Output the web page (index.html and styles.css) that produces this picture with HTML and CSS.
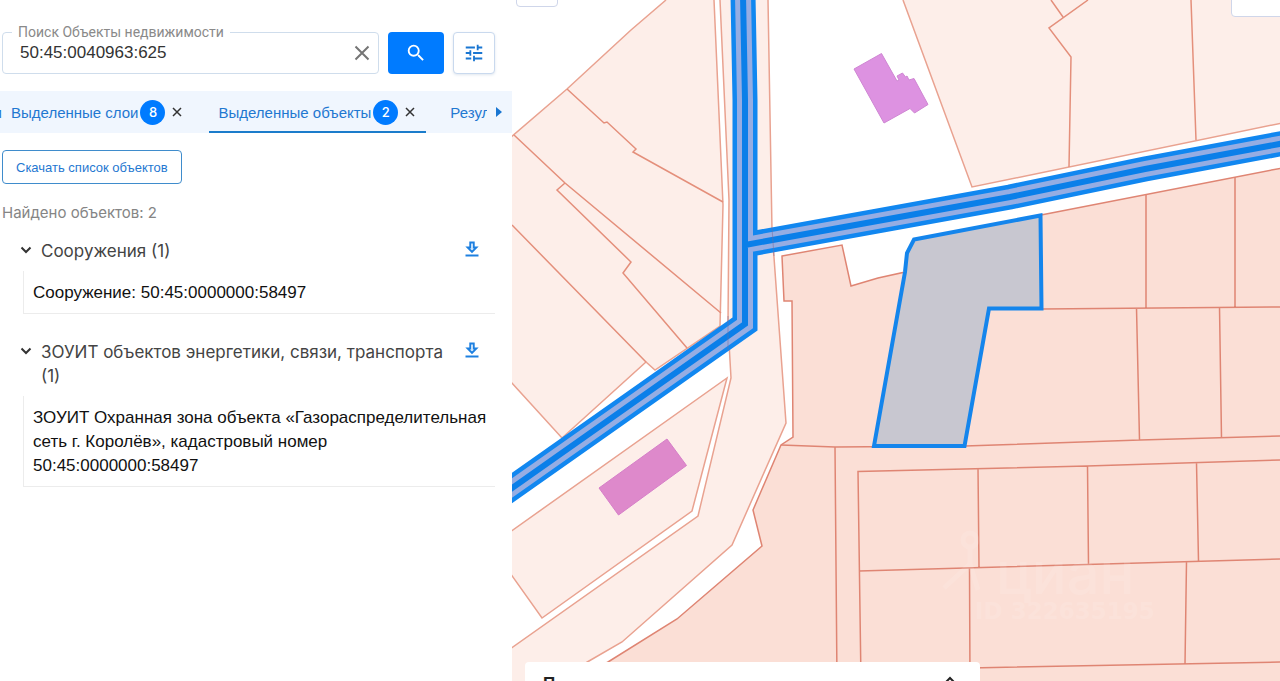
FILE: index.html
```html
<!DOCTYPE html>
<html lang="ru">
<head>
<meta charset="utf-8">
<meta name="viewport" content="width=device-width, initial-scale=1">
<title>Поиск объектов недвижимости</title>
<link rel="stylesheet" href="styles.css">
</head>
<body>
<div class="app">
  <aside class="sidebar">
    <form class="search">
      <div class="search-field">
        <label class="search-label" for="query">Поиск Объекты недвижимости</label>
        <input class="search-input" id="query" type="text" value="50:45:0040963:625">
        <button class="clear" type="button" aria-label="Очистить">
          <svg width="16" height="16" viewBox="0 0 16 16"><path d="M1.500 1.500l13 13M14.500 1.500l-13 13" fill="none" stroke="#757575" stroke-width="2"/></svg>
        </button>
      </div>
      <button class="search-submit" type="button" aria-label="Найти">
        <svg width="22" height="22" viewBox="0 0 24 24"><path fill="#fff" d="M15.500 14h-.79l-.28-.27A6.470 6.470 0 0 0 16 9.500 6.500 6.500 0 1 0 9.500 16c1.610 0 3.090-.59 4.230-1.570l.27.28v.79l5 4.990L20.490 19l-4.990-5zm-6 0C7.010 14 5 11.990 5 9.500S7.010 5 9.500 5 14 7.010 14 9.500 11.990 14 9.500 14z"/></svg>
      </button>
      <button class="filter" type="button" aria-label="Фильтры">
        <svg width="22" height="22" viewBox="0 0 24 24"><path fill="#1976d2" d="M3 17v2h6v-2H3zM3 5v2h10V5H3zm10 16v-2h8v-2h-8v-2h-2v6h2zM7 9v2H3v2h4v2h2V9H7zm14 4v-2H11v2h10zm-6-4h2V7h4V5h-4V3h-2v6z"/></svg>
      </button>
    </form>

    <nav class="tabs">
      <div class="tabs-view">
        <button class="tab tab-prev" type="button">и</button>
        <div class="tab">
          <button class="tab-title" type="button">Выделенные слои</button><span class="badge">8</span>
          <button class="tab-close" type="button" aria-label="Закрыть"><svg width="10" height="10" viewBox="0 0 10 10"><path d="M1 1l8 8M9 1l-8 8" fill="none" stroke="#333" stroke-width="1.500"/></svg></button>
        </div>
        <div class="tab tab-active">
          <button class="tab-title" type="button">Выделенные объекты</button><span class="badge">2</span>
          <button class="tab-close" type="button" aria-label="Закрыть"><svg width="10" height="10" viewBox="0 0 10 10"><path d="M1 1l8 8M9 1l-8 8" fill="none" stroke="#333" stroke-width="1.500"/></svg></button>
        </div>
        <button class="tab tab-next" type="button">Результаты</button>
      </div>
      <button class="tabs-more" type="button" aria-label="Дальше"><svg width="6" height="10" viewBox="0 0 6 10"><path d="M0 0l6 5-6 5z" fill="#1976d2"/></svg></button>
    </nav>

    <div class="results">
      <button class="download-all" type="button">Скачать список объектов</button>
      <p class="count">Найдено объектов: 2</p>

      <section class="group">
        <div class="group-head">
          <svg class="chevron" width="12" height="8" viewBox="0 0 12 8"><path d="M1.500 1.500L6 6l4.500-4.500" fill="none" stroke="#333" stroke-width="2"/></svg>
          <h2 class="group-title">Сооружения (1)</h2>
          <button class="download" type="button" aria-label="Скачать"><svg width="14" height="16" viewBox="0 0 14 16"><path d="M5.200 1.500v5H2.500L7 11l4.500-4.500H8.800v-5z" fill="#d6e9fc" stroke="#1e80e0" stroke-width="1.800"/><path d="M.5 14.500h13" stroke="#1e80e0" stroke-width="2"/></svg></button>
        </div>
        <div class="item">Сооружение: 50:45:0000000:58497</div>
      </section>

      <section class="group">
        <div class="group-head">
          <svg class="chevron" width="12" height="8" viewBox="0 0 12 8"><path d="M1.500 1.500L6 6l4.500-4.500" fill="none" stroke="#333" stroke-width="2"/></svg>
          <h2 class="group-title">ЗОУИТ объектов энергетики, связи, транспорта (1)</h2>
          <button class="download" type="button" aria-label="Скачать"><svg width="14" height="16" viewBox="0 0 14 16"><path d="M5.200 1.500v5H2.500L7 11l4.500-4.500H8.800v-5z" fill="#d6e9fc" stroke="#1e80e0" stroke-width="1.800"/><path d="M.5 14.500h13" stroke="#1e80e0" stroke-width="2"/></svg></button>
        </div>
        <div class="item">ЗОУИТ Охранная зона объекта «Газораспределительная сеть г. Королёв», кадастровый номер 50:45:0000000:58497</div>
      </section>
    </div>
  </aside>

  <main class="map">
    <svg class="map-canvas" viewBox="512 0 768 681" preserveAspectRatio="xMinYMin slice" role="img" aria-label="Кадастровая карта">
      <g class="parcel-light">
        <path d="M666 0L631 30 567 89 510 138V381L562 438 646 362 655 370 720 326 723 205 714 0"/>
        <path d="M567 89L604 123 607 122 636 149 633 152 723 202M514 135L565 183 721 313M565 183L557 190 631 262 623 273 687 348M512 225L646 362" class="line"/>
        <path d="M720 0L729 200 728 325 731 378 698 516 510 649V690H540L589 661 622 642 732 545 786 423 772 230 768 0"/>
        <path d="M727 378L692 511 542 618 510 573V532Z"/>
        <path d="M903 0L972 187 1282 123V-2"/>
        <path d="M1051 0L1063 17M1088 0L1049 28 1071 57 1069 167M1191 0L1196 140" class="line"/>
      </g>
      <g class="parcel-dark">
        <path d="M782 256L842 245 851 286 878 278 905 272 914 240 1041 215 1282 168V690H560L608 662 677 619 762 546 753 510 781 445 793 437 792 301H784Z"/>
        <path class="line" d="M781 445L835 447 965 446 1140 440 1280 436M835 447L837 681M861 681L858 471.500 1087 466 1280 460M978 468L979 567M1087.500 466L1088.500 565M1196.500 463L1198.500 561M859 571L1280 559M969.500 568L970 681M1186.500 562L1185 664M970 668L1280 662M1146 194V308M1235 177V307M1042 309L1280 307M1136.500 308L1139.500 440M1219.500 307L1221.500 438"/>
      </g>
      <path class="house" d="M854 69L881.500 53.500 897 81 899 80 897 76 902.500 73 905.500 77 907 76 909 80 914 78.500 928 104.500 914.500 113 910 108.500 884 123Z"/>
      <path class="house house-rose" d="M599 488L667 439 686.500 465.500 618.500 515Z"/>
      <g class="pipe">
        <path class="pipe-edge" d="M743 -5L745 100V324L500 496.500M745 245L1010 197 1145 169 1290 142"/>
        <path class="pipe-zone" d="M743 -5L745 100V324L500 496.500M745 245L1010 197 1145 169 1290 142"/>
        <path class="pipe-core" d="M743 -5L745 100V324L500 496.500M745 245L1010 197 1145 169 1290 142"/>
        <path class="under" d="M772 228L774 256M728 316L728 350"/>
      </g>
      <path class="selected" d="M914 239.500L1040.500 215.500 1041.500 308.500H989L964.500 446H874L905 272 907 253Z"/>
      <g class="watermark">
        <circle cx="970" cy="540" r="7"/>
        <path d="M970 548V564L944 588M970 564L978 590"/>
        <text class="mark-name" x="996" y="594">циан</text>
        <text class="mark-id" x="975" y="619">ID 322635195</text>
      </g>
    </svg>
    <div class="control control-left"></div>
    <div class="control control-right"></div>
    <div class="sheet">
      <span class="sheet-title">П</span>
      <svg class="sheet-arrow" width="12" height="8" viewBox="0 0 12 8"><path d="M1.500 6.500L6 2l4.500 4.500" fill="none" stroke="#222" stroke-width="2"/></svg>
    </div>
  </main>
</div>
</body>
</html>
```

FILE: styles.css
```css
* { box-sizing: border-box; }

body {
  margin: 0;
  font-family: "Liberation Sans", Arial, sans-serif;
  font-size: 17px;
  color: #111;
  background: #fff;
}

button {
  padding: 0;
  border: 0;
  background: none;
  font: inherit;
  color: inherit;
  cursor: pointer;
}

svg { display: block; }

.app {
  display: grid;
  grid-template-columns: 2fr 3fr;
  height: 100vh;
  overflow: hidden;
}

.sidebar { min-width: 0; }

.search {
  display: flex;
  gap: 9px;
  padding: 32px 17px 17px 2px;
}

.search-field {
  position: relative;
  display: flex;
  flex: 1;
  align-items: center;
  height: 42px;
  padding: 0 8px 0 17px;
  border: 1px solid #cfddec;
  border-radius: 4px;
}

.search-label {
  position: absolute;
  top: -9px;
  left: 9px;
  padding: 0 6px;
  background: #fff;
  color: #8a8a8a;
  font: 14px/16px Roboto, sans-serif;
}

.search-input {
  flex: 1;
  min-width: 0;
  padding: 0;
  border: 0;
  outline: 0;
  background: none;
  color: #333;
  font: inherit;
}

.search-submit,
.filter {
  display: grid;
  place-items: center;
  width: 56px;
  height: 42px;
  border-radius: 4px;
  background: #007bff;
}

.filter {
  width: 42px;
  border: 1px solid #c9d9ee;
  background: #fff;
  box-shadow: 0 1px 3px #dfe6ef;
}

.tabs {
  display: flex;
  height: 42px;
  background: #f0f6fe;
  color: #1f78d1;
  font-size: 15px;
}

.tabs-view {
  display: flex;
  flex: 1;
  min-width: 0;
  overflow: hidden;
}

.tab {
  display: flex;
  flex: none;
  align-items: center;
  padding: 0 17px 0 9px;
}

.tab-prev {
  justify-content: flex-end;
  width: 2px;
  padding: 0;
  overflow: hidden;
}

.tab-active {
  margin-left: 10px;
  border-bottom: 2px solid #1b7ccb;
  padding-right: 11px;
}

.tab-active > * { margin-bottom: -2px; }

.tab-next { padding-left: 24px; }

.badge {
  display: grid;
  place-items: center;
  width: 25px;
  height: 25px;
  margin-left: 2px;
  border-radius: 50%;
  background: #007bff;
  color: #fff;
  font: 500 13px Inter, sans-serif;
}

.tab-close { margin-left: 7px; }

.tabs-more {
  display: flex;
  align-items: center;
  width: 25px;
  padding-left: 9px;
}

.results { padding: 17px 17px 0 2px; }

.download-all {
  height: 34px;
  padding: 0 13px;
  border: 1px solid #3f8ccc;
  border-radius: 4px;
  color: #1f78d1;
  font-size: 13px;
}

.count {
  margin: 17px 0 14px;
  color: #858585;
  font: 15px/24px Inter, sans-serif;
}

.group { margin-bottom: 26px; }

.group-head {
  display: flex;
  align-items: flex-start;
  padding: 0 16px 8px 18px;
}

.chevron {
  flex: none;
  margin-top: 7px;
}

.group-title {
  flex: 1;
  margin: 0 0 0 9px;
  color: #444;
  font: 400 17px/24px Inter, sans-serif;
}

.download { margin-top: 2px; }

.item {
  margin-left: 21px;
  padding: 10px 0 8px 9px;
  border: 1px solid #ececec;
  border-width: 0 0 1px 1px;
  line-height: 24px;
}

.map {
  position: relative;
  min-width: 0;
  overflow: hidden;
}

.map-canvas {
  width: 100%;
  height: 100%;
}

.parcel-light {
  fill: #fdeee9;
  stroke: #e9a290;
  stroke-width: 1.5;
}

.parcel-dark {
  fill: #fbdfd6;
  stroke: #df8573;
  stroke-width: 1.5;
}

.parcel-light .line,
.parcel-dark .line { fill: none; }

.parcel-light .line { stroke: #e48f7b; }

.house {
  fill: #dd92e1;
  stroke: #cf86d3;
}

.house-rose {
  fill: #de89cb;
  stroke: #d67fc8;
}

.pipe { fill: none; }

.pipe-edge {
  stroke: #1187f0;
  stroke-width: 25;
}

.pipe-zone {
  stroke: #95ade3;
  stroke-width: 16;
}

.pipe-core {
  stroke: #0a7fe9;
  stroke-width: 6;
}

.under {
  stroke: #7a6c9c;
  stroke-opacity: .5;
}

.selected {
  fill: #c8c7d0;
  stroke: #1485ec;
  stroke-width: 4;
}

.watermark {
  fill: none;
  stroke: #fff;
  stroke-width: 5;
  opacity: .11;
}

.watermark text {
  fill: #fff;
  stroke: none;
}

.mark-name { font: 500 58px Inter, sans-serif; }

.mark-id { font: bold 23px "DejaVu Sans", sans-serif; }

.control {
  position: absolute;
  top: -1px;
  border: 1px solid #cfd6ea;
  background: #fff;
}

.control-left {
  left: 4px;
  width: 42px;
  height: 8px;
  border-radius: 0 0 4px 4px;
}

.control-right {
  right: -1px;
  width: 50px;
  height: 18px;
  border-radius: 0 0 0 4px;
}

.sheet {
  position: absolute;
  right: 300px;
  bottom: 0;
  left: 13px;
  display: flex;
  align-items: flex-start;
  justify-content: space-between;
  height: 19px;
  padding: 12px 24px 0 18px;
  overflow: hidden;
  border-radius: 4px 4px 0 0;
  background: #fff;
}

.sheet-title {
  color: #222;
  font: bold 17px/20px "Liberation Sans", sans-serif;
}

.sheet-arrow { margin-top: 2px; }
```
